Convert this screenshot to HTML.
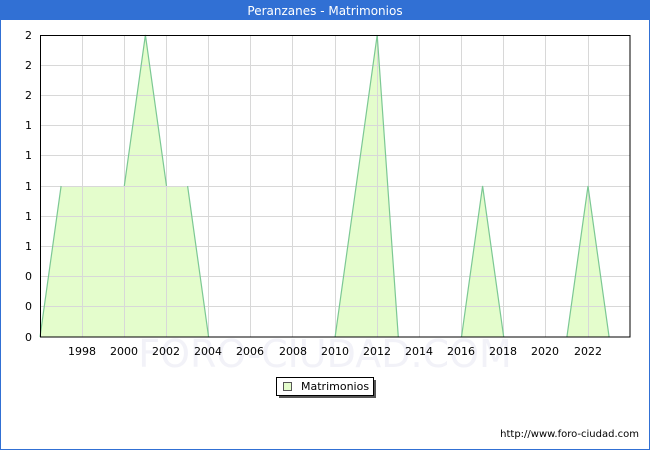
<!DOCTYPE html>
<html><head><meta charset="utf-8"><style>
body{margin:0;width:650px;height:450px;overflow:hidden;background:#fff;font-family:"DejaVu Sans","Liberation Sans",sans-serif}
</style></head><body>
<svg width="650" height="450" xmlns="http://www.w3.org/2000/svg" font-family="DejaVu Sans, Liberation Sans, sans-serif">
<rect x="0.5" y="0.5" width="649" height="449" fill="#fff" stroke="#3170d4"/>
<rect x="0" y="0" width="650" height="20" fill="#3170d4"/>
<text x="325" y="15" fill="#fff" font-size="12" text-anchor="middle">Peranzanes - Matrimonios</text>
<text x="325" y="367" fill="#f2f2f8" font-size="38" text-anchor="middle">FORO-CIUDAD.COM</text>
<polygon fill="#e4fdcc" points="40,337 61.1,186 124.3,186 145.4,35 166.5,186 187.6,186 208.6,337 335.1,337 377.2,35 398.3,337 461.5,337 482.6,186 503.7,337 566.9,337 588,186 609.1,337"/>
<g stroke="#d8d8d8" stroke-width="1">
<line x1="40" x2="630" y1="65.5" y2="65.5"/><line x1="40" x2="630" y1="95.5" y2="95.5"/><line x1="40" x2="630" y1="125.5" y2="125.5"/><line x1="40" x2="630" y1="155.5" y2="155.5"/><line x1="40" x2="630" y1="186.5" y2="186.5"/><line x1="40" x2="630" y1="216.5" y2="216.5"/><line x1="40" x2="630" y1="246.5" y2="246.5"/><line x1="40" x2="630" y1="276.5" y2="276.5"/><line x1="40" x2="630" y1="306.5" y2="306.5"/>
<line x1="82.5" x2="82.5" y1="35" y2="337"/><line x1="124.5" x2="124.5" y1="35" y2="337"/><line x1="166.5" x2="166.5" y1="35" y2="337"/><line x1="208.5" x2="208.5" y1="35" y2="337"/><line x1="250.5" x2="250.5" y1="35" y2="337"/><line x1="292.5" x2="292.5" y1="35" y2="337"/><line x1="335.5" x2="335.5" y1="35" y2="337"/><line x1="377.5" x2="377.5" y1="35" y2="337"/><line x1="419.5" x2="419.5" y1="35" y2="337"/><line x1="461.5" x2="461.5" y1="35" y2="337"/><line x1="503.5" x2="503.5" y1="35" y2="337"/><line x1="545.5" x2="545.5" y1="35" y2="337"/><line x1="588.5" x2="588.5" y1="35" y2="337"/>
</g>
<g stroke="#7cc894" stroke-width="1.2" fill="none">
<polyline points="40,337 61.1,186"/><polyline points="124.3,186 145.4,35 166.5,186"/><polyline points="187.6,186 208.6,337"/><polyline points="335.1,337 377.2,35 398.3,337"/><polyline points="461.5,337 482.6,186 503.7,337"/><polyline points="566.9,337 588,186 609.1,337"/>
</g>
<rect x="40.5" y="35.5" width="589.5" height="301.5" fill="none" stroke="#000"/>
<g font-size="11" fill="#000" text-anchor="end">
<text x="32" y="39">2</text><text x="32" y="69">2</text><text x="32" y="99">2</text><text x="32" y="129">1</text><text x="32" y="159">1</text><text x="32" y="190">1</text><text x="32" y="220">1</text><text x="32" y="250">1</text><text x="32" y="280">0</text><text x="32" y="310">0</text><text x="32" y="341">0</text>
</g>
<g font-size="11" fill="#000" text-anchor="middle">
<text x="82" y="355">1998</text><text x="124" y="355">2000</text><text x="166" y="355">2002</text><text x="208" y="355">2004</text><text x="250" y="355">2006</text><text x="293" y="355">2008</text><text x="335" y="355">2010</text><text x="377" y="355">2012</text><text x="419" y="355">2014</text><text x="461" y="355">2016</text><text x="503" y="355">2018</text><text x="545" y="355">2020</text><text x="588" y="355">2022</text>
</g>
<rect x="279" y="380" width="97" height="18" fill="#555"/>
<rect x="276.5" y="377.5" width="97" height="18" fill="#fff" stroke="#000"/>
<rect x="283.5" y="382.5" width="8" height="8" fill="#e4fdcc" stroke="#555"/>
<text x="301" y="390" font-size="11">Matrimonios</text>
<text x="639" y="437" font-size="10" text-anchor="end">http://www.foro-ciudad.com</text>
</svg>
</body></html>
